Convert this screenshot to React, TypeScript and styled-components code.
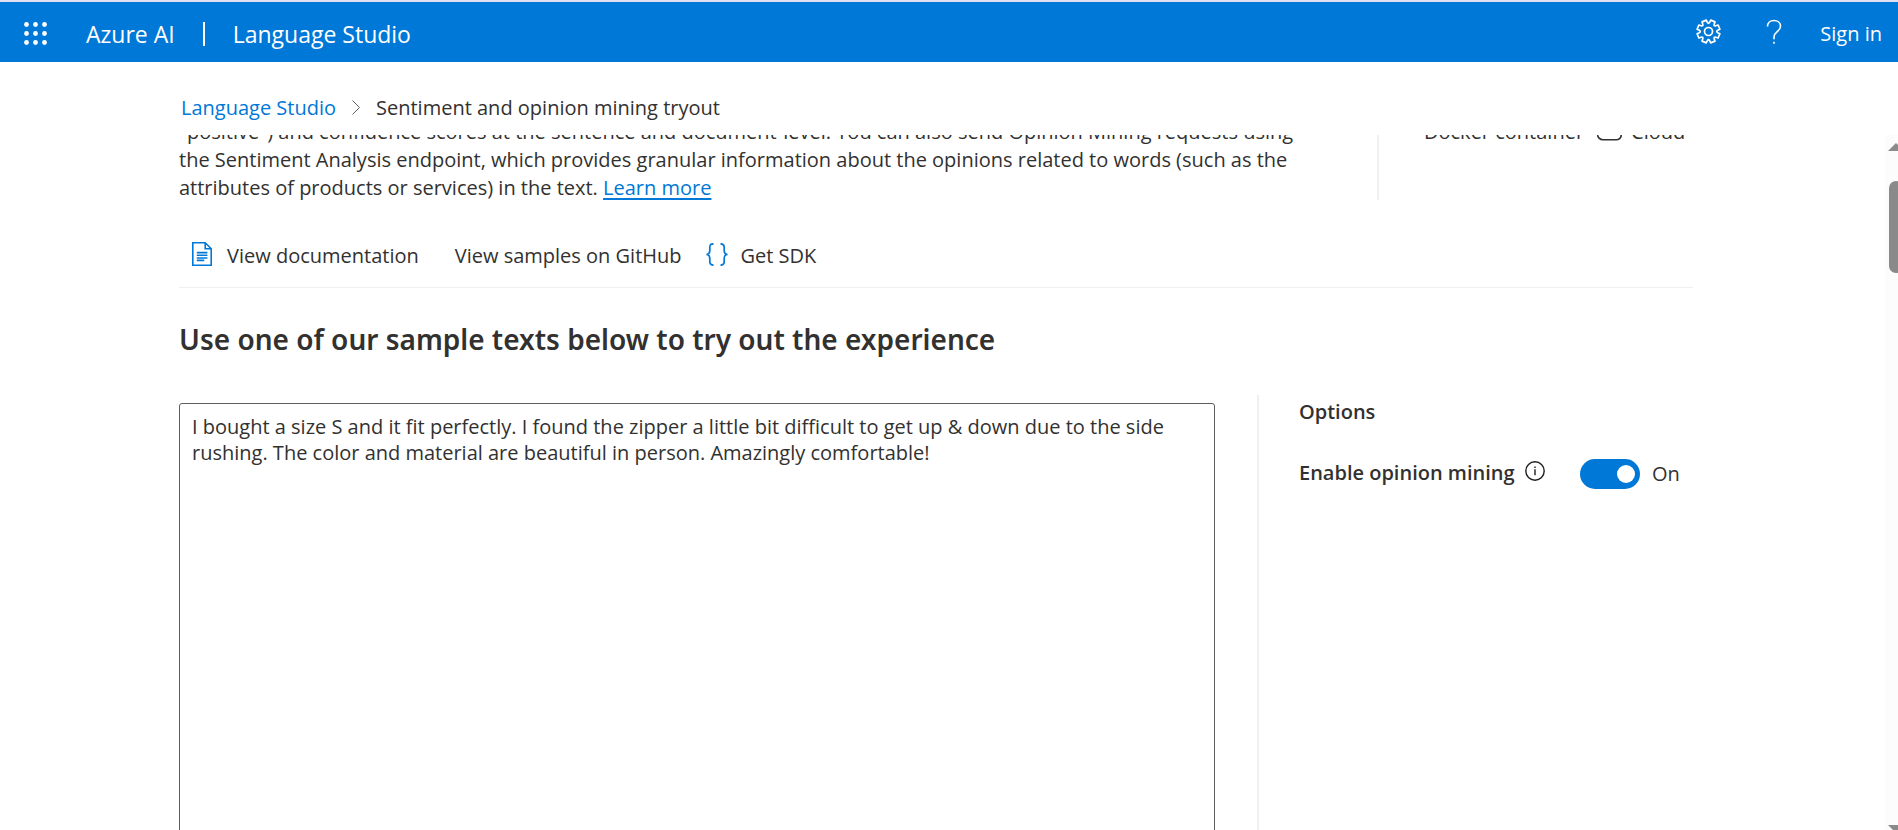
import React, { useLayoutEffect, useRef, useState } from "react";
import styled, { createGlobalStyle } from "styled-components";

const color = {
  brand: "#0078d7",
  link: "#0078d7",
  text: "#323130",
  rule: "#f0f0f0",
};

const GlobalStyle = createGlobalStyle`
  * { box-sizing: border-box; }
  body {
    margin: 0;
    background: #fff;
    color: ${color.text};
    font-family: "Open Sans", "Noto Sans", sans-serif;
    font-size: 20px;
    line-height: 28px;
  }
  button { font: inherit; color: inherit; background: none; border: 0; padding: 0; cursor: pointer; }
`;

const Page = styled.div`
  display: flex;
  flex-direction: column;
  height: 100vh;
  overflow: hidden;
`;

const Header = styled.header`
  display: flex;
  align-items: center;
  flex: none;
  height: 62px;
  padding: 3px 16px 0 24px;
  border-top: 2px solid #e3dff0;
  background: ${color.brand};
  color: #fff;
  white-space: nowrap;
`;

const HeaderButton = styled.button`
  display: flex;
  align-items: center;
`;

const Brand = styled.span`
  display: flex;
  align-items: center;
  gap: 28px;
  margin-left: 39px;
  font-size: 23px;
`;

const BrandRule = styled.span`
  width: 2px;
  height: 24px;
  background: #fff;
`;

const HeaderTools = styled.div`
  display: flex;
  align-items: center;
  gap: 38px;
  margin-left: auto;
`;

const HeaderIcons = styled.div`
  display: flex;
  align-items: center;
  gap: 45px;
  padding-bottom: 4px;
`;

const Breadcrumb = styled.nav`
  display: flex;
  align-items: center;
  flex: none;
  gap: 16px;
  height: 73px;
  padding: 18px 181px 0;
  white-space: nowrap;
`;

const CrumbLink = styled.a`
  color: ${color.link};
  text-decoration: none;
`;

const Body = styled.div`
  display: flex;
  flex: 1;
  min-height: 0;
`;

const Scroller = styled.main`
  flex: 1;
  min-width: 0;
  overflow-y: auto;
  scrollbar-width: none;
  padding: 0 192px 0 179px;
`;

const Intro = styled.section`
  display: flex;
`;

const Description = styled.p`
  flex: 1;
  margin: 0;
  padding-right: 72px;
`;

const TextLink = styled.a`
  color: ${color.link};
  text-decoration: underline;
  text-decoration-thickness: 2px;
  text-underline-offset: 3px;
`;

const Availability = styled.aside`
  display: flex;
  flex: none;
  gap: 13px;
  width: 316px;
  height: 82px;
  padding-left: 45px;
  border-left: 2px solid ${color.rule};
  white-space: nowrap;
`;

const AvailabilityItem = styled.span`
  display: flex;
  align-items: center;
  gap: 9px;
  height: 28px;
`;

const Actions = styled.div`
  display: flex;
  align-items: center;
  height: 64px;
  margin-top: 22px;
  padding-left: 13px;
  border-bottom: 1px solid ${color.rule};
`;

const ActionButton = styled.button<{ $gap?: number; $after?: number }>`
  display: flex;
  align-items: center;
  gap: ${(p) => p.$gap ?? 0}px;
  margin-right: ${(p) => p.$after ?? 0}px;
  white-space: nowrap;

  svg {
    margin-bottom: 3px;
  }
`;

const Title = styled.h2`
  margin: 31px 0 0;
  font-family: "Noto Sans", "Open Sans", sans-serif;
  font-size: 28px;
  font-weight: 600;
  line-height: 40px;
`;

const Workspace = styled.section`
  display: flex;
  margin-top: 36px;
`;

const SampleText = styled.textarea`
  flex: 1;
  min-width: 0;
  height: 640px;
  margin: 8px 42px 0 0;
  padding: 10px 12px;
  border: 1px solid #605e5c;
  border-radius: 3px;
  background: #fff;
  color: ${color.text};
  font: inherit;
  line-height: 26px;
  resize: none;
  outline: none;
`;

const Options = styled.aside`
  flex: none;
  width: 436px;
  padding: 3px 0 0 40px;
  border-left: 2px solid ${color.rule};
`;

const OptionsTitle = styled.h3`
  margin: 0;
  font-size: 20px;
  font-weight: 600;
  line-height: 28px;
`;

const OptionRow = styled.div`
  display: flex;
  align-items: center;
  margin-top: 31px;
  white-space: nowrap;
`;

const OptionLabel = styled.label`
  font-weight: 600;
`;

const InfoButton = styled.button`
  display: flex;
  margin: 0 auto 5px 10px;
`;

const Switch = styled.div`
  display: flex;
  align-items: center;
  gap: 12px;
  padding-top: 2px;
`;

const Toggle = styled.input`
  appearance: none;
  display: flex;
  align-items: center;
  justify-content: flex-start;
  width: 60px;
  height: 30px;
  margin: 0;
  padding: 0 5px;
  border-radius: 15px;
  background: #8a8886;
  cursor: pointer;
  &::before {
    content: "";
    width: 18px;
    height: 18px;
    border-radius: 50%;
    background: #fff;
  }
  &:checked {
    justify-content: flex-end;
    background: ${color.brand};
  }
`;

const ToggleState = styled.span`
  width: 41px;
`;

const ScrollTrack = styled.div`
  display: flex;
  flex-direction: column;
  flex: none;
  width: 13px;
  padding: 8px 0 0 3px;
  overflow: hidden;
  background: #fcfcfc;
`;

const ScrollThumb = styled.div`
  flex: none;
  width: 14px;
  height: 92px;
  margin: 30px 0 auto 1px;
  border-radius: 7px;
  background: #8a8a8a;
`;

const Arrow = styled.svg`
  display: block;
  flex: none;
  width: 16px;
  height: 8px;
`;

const ArrowDown = styled(Arrow)`
  height: 5px;
`;

const Waffle = () => (
  <svg width="23" height="23" viewBox="0 0 23 23" fill="#fff" aria-hidden="true">
    {[2.5, 11.5, 20.5].map((y) => [2.5, 11.5, 20.5].map((x) => <circle key={`${x}-${y}`} cx={x} cy={y} r="2.4" />))}
  </svg>
);

const gearPath = (() => {
  const teeth = 8;
  const pts: string[] = [];
  const at = (r: number, a: number) => `${(12.5 + r * Math.cos(a)).toFixed(2)} ${(12.5 + r * Math.sin(a)).toFixed(2)}`;
  for (let i = 0; i < teeth; i++) {
    const c = (i * 2 * Math.PI) / teeth + Math.PI / 8;
    pts.push(`${i ? "L" : "M"}${at(9.3, c - 0.27)}`, `L${at(11.6, c - 0.2)}`, `L${at(11.6, c + 0.2)}`, `L${at(9.3, c + 0.27)}`);
    pts.push(`Q${at(7.2, c + Math.PI / 8)} ${at(9.3, c + Math.PI / 4 - 0.27)}`);
  }
  return pts.join(" ") + "Z";
})();

const Gear = () => (
  <svg width="25" height="25" viewBox="0 0 25 25" fill="none" stroke="#fff" strokeWidth="1.7" strokeLinejoin="round" aria-hidden="true">
    <path d={gearPath} />
    <circle cx="12.5" cy="12.5" r="4" />
  </svg>
);

const Question = () => (
  <svg width="16" height="26" viewBox="0 0 16 26" fill="none" stroke="#fff" strokeWidth="1.6" aria-hidden="true">
    <path d="M1.5 7.5C1.5 3.8 4.3 1.5 8 1.5s6.5 2.3 6.5 5.7c0 5.2-6.5 5.6-6.5 10.6v2.4" />
    <path d="M8 22.8v2" />
  </svg>
);

const Chevron = () => (
  <svg width="8" height="15" viewBox="0 0 8 15" fill="none" stroke="#605e5c" aria-hidden="true">
    <path d="M.5.5l7 7-7 7" />
  </svg>
);

const DocumentIcon = () => (
  <svg width="20" height="24" viewBox="0 0 20 24" fill="none" stroke={color.link} strokeWidth="1.6" aria-hidden="true">
    <path d="M.8.8h12.4l6 6v16.4H.8zM13.2.8v6h6M4.8 10.6h10.6M4.8 13.3h10.6M4.8 16h10.6M4.8 18.4h7.4" />
  </svg>
);

const Braces = () => (
  <svg width="22" height="23" viewBox="0 0 22 23" fill="none" stroke={color.link} strokeWidth="1.7" aria-hidden="true">
    <path d="M7.5.8C4.8.8 3.8 2 3.8 4.4v3.4c0 2.2-.9 3.5-3.3 3.7 2.4.2 3.3 1.5 3.3 3.7v3.4c0 2.4 1 3.6 3.7 3.6" />
    <path d="M14.5.8c2.7 0 3.7 1.2 3.7 3.6v3.4c0 2.2.9 3.5 3.3 3.7-2.4.2-3.3 1.5-3.3 3.7v3.4c0 2.4-1 3.6-3.7 3.6" />
  </svg>
);

const CloudIcon = () => (
  <svg width="25" height="18" viewBox="0 0 25 18" fill="none" stroke={color.text} strokeWidth="1.6" aria-hidden="true">
    <path d="M6 16.8h13a5 5 0 0 0 .6-10A7 7 0 0 0 6.2 5.6 5.5 5.5 0 0 0 6 16.8z" />
  </svg>
);

const InfoIcon = () => (
  <svg width="20" height="20" viewBox="0 0 20 20" fill="none" stroke="#201f1e" strokeWidth="1.4" aria-hidden="true">
    <circle cx="10" cy="10" r="9.2" />
    <path d="M10 8.2v6M10 5.4v1.5" />
  </svg>
);

export default function App() {
  const scroller = useRef<HTMLElement>(null);
  const [enabled, setEnabled] = useState(true);

  useLayoutEffect(() => {
    if (scroller.current) scroller.current.scrollTop = 17;
  }, []);

  return (
    <Page>
      <GlobalStyle />
      <Header>
        <HeaderButton aria-label="App launcher"><Waffle /></HeaderButton>
        <Brand>
          <span>Azure AI</span>
          <BrandRule />
          <span>Language Studio</span>
        </Brand>
        <HeaderTools>
          <HeaderIcons>
            <HeaderButton aria-label="Settings"><Gear /></HeaderButton>
            <HeaderButton aria-label="Help"><Question /></HeaderButton>
          </HeaderIcons>
          <HeaderButton>Sign in</HeaderButton>
        </HeaderTools>
      </Header>
      <Breadcrumb aria-label="Breadcrumb">
        <CrumbLink href="#home">Language Studio</CrumbLink>
        <Chevron />
        <span>Sentiment and opinion mining tryout</span>
      </Breadcrumb>
      <Body>
        <Scroller ref={scroller}>
          <Intro>
            <Description>
              "positive") and confidence scores at the sentence and document-level. You can also send Opinion Mining
              requests using the Sentiment Analysis endpoint, which provides granular information about the opinions
              related to words (such as the attributes of products or services) in the text.{" "}
              <TextLink href="#learn">Learn more</TextLink>
            </Description>
            <Availability>
              <AvailabilityItem>Docker container</AvailabilityItem>
              <AvailabilityItem><CloudIcon />Cloud</AvailabilityItem>
            </Availability>
          </Intro>
          <Actions>
            <ActionButton $gap={15} $after={36}><DocumentIcon />View documentation</ActionButton>
            <ActionButton $after={24}>View samples on GitHub</ActionButton>
            <ActionButton $gap={13}><Braces />Get SDK</ActionButton>
          </Actions>
          <Title>Use one of our sample texts below to try out the experience</Title>
          <Workspace>
            <SampleText
              aria-label="Sample text"
              spellCheck={false}
              defaultValue="I bought a size S and it fit perfectly. I found the zipper a little bit difficult to get up & down due to the side rushing. The color and material are beautiful in person. Amazingly comfortable!"
            />
            <Options>
              <OptionsTitle>Options</OptionsTitle>
              <OptionRow>
                <OptionLabel htmlFor="opinion-mining">Enable opinion mining</OptionLabel>
                <InfoButton aria-label="About opinion mining"><InfoIcon /></InfoButton>
                <Switch>
                  <Toggle
                    id="opinion-mining"
                    type="checkbox"
                    role="switch"
                    checked={enabled}
                    onChange={(e) => setEnabled(e.target.checked)}
                  />
                  <ToggleState>{enabled ? "On" : "Off"}</ToggleState>
                </Switch>
              </OptionRow>
            </Options>
          </Workspace>
        </Scroller>
        <ScrollTrack aria-hidden="true">
          <Arrow viewBox="0 0 16 8"><path d="M0 8L8 0l8 8z" fill="#8a8a8a" /></Arrow>
          <ScrollThumb />
          <ArrowDown viewBox="0 0 16 5"><path d="M0 0h16l-5 5H5z" fill="#8a8a8a" /></ArrowDown>
        </ScrollTrack>
      </Body>
    </Page>
  );
}
